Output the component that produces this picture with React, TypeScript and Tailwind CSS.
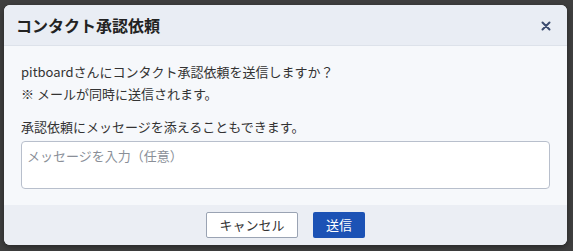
import React from "react";

export default function App() {
  const font = { fontFamily: '"Noto Sans CJK JP", "Noto Sans", sans-serif' };
  return (
    <div className="w-[573px] h-[251px] bg-[#3f3f3f] pt-[5px] px-[4px] overflow-hidden" style={font}>
      <div className="w-[563px] h-[240px] rounded-[6px] overflow-hidden flex flex-col bg-[#f6f8fb] shadow-[0_2px_6px_rgba(0,0,0,0.4)]">
        <div className="h-[41px] bg-[#e9edf4] border-b border-[#dde2ea] flex items-center justify-between pl-[12px] pr-[16px]">
          <div className="text-[16px] font-bold text-[#222] leading-none">コンタクト承認依頼</div>
          <svg width="10" height="10" viewBox="0 0 10 10" className="text-[#3a4a6e] mt-[1px]">
            <path d="M1.5 1.5 L8.5 8.5 M8.5 1.5 L1.5 8.5" stroke="currentColor" strokeWidth="2" strokeLinecap="round" />
          </svg>
        </div>
        <div className="flex-1 px-[17px] pt-[15px] text-[13px] text-[#333] leading-[22px]">
          <p>pitboardさんにコンタクト承認依頼を送信しますか？</p>
          <p>※ メールが同時に送信されます。</p>
          <p className="mt-[11px]">承認依頼にメッセージを添えることもできます。</p>
          <div className="mt-[3px] h-[48px] bg-white border border-[#b8bfcc] rounded-[4px] px-[5px] py-[4px] text-[13px] leading-[20px] text-[#8a8f98]">
            メッセージを入力（任意）
          </div>
        </div>
        <div className="h-[40px] bg-[#ebeef4] flex items-center justify-center gap-[15px]">
          <button className="w-[92px] h-[26px] bg-white border border-[#9aa3b3] rounded-[2px] text-[13px] text-[#333]">キャンセル</button>
          <button className="w-[52px] h-[26px] bg-[#1c52b5] rounded-[2px] text-[13px] text-white">送信</button>
        </div>
      </div>
    </div>
  );
}
